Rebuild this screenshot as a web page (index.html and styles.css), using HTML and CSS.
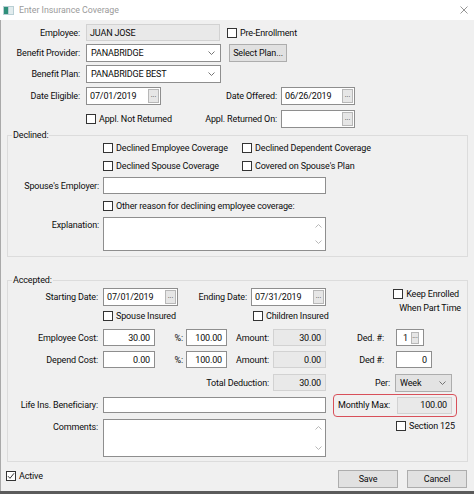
FILE: index.html
```html
<!DOCTYPE html>
<html>
<head>
<meta charset="utf-8">
<title>Enter Insurance Coverage</title>
<link rel="stylesheet" href="styles.css">
</head>
<body>
<div class="window">
  <div class="titlebar">
    <svg class="appicon" width="11" height="9" viewBox="0 0 11 9"><rect x="0" y="0" width="11" height="9" fill="#b9cfd4"/><rect x="1" y="1" width="4" height="7" fill="#2f8f7a"/><rect x="6" y="1" width="4" height="7" fill="#e2ecee"/></svg>
    <span class="title">Enter Insurance Coverage</span>
    <svg class="close" width="8" height="8" viewBox="0 0 8 8"><path d="M0.5 0.5L7.5 7.5M7.5 0.5L0.5 7.5" stroke="#8a8a8a" stroke-width="0.9"/></svg>
  </div>

  <div class="row r-emp">
    <span class="lbl top-lbl">Employee:</span>
    <div class="fld ro f-emp">JUAN JOSE</div>
    <span class="chk pre"><span class="cb"></span>Pre-Enrollment</span>
  </div>
  <div class="row r-prov">
    <span class="lbl top-lbl">Benefit Provider:</span>
    <div class="fld sel f-sel"><span>PANABRIDGE</span><svg class="chev" width="7" height="4" viewBox="0 0 7 4"><path d="M0.5 0.5L3.5 3.5L6.5 0.5" fill="none" stroke="#666" stroke-width="0.9"/></svg></div>
    <div class="btn b-plan">Select Plan...</div>
  </div>
  <div class="row r-plan">
    <span class="lbl top-lbl">Benefit Plan:</span>
    <div class="fld sel f-sel"><span>PANABRIDGE BEST</span><svg class="chev" width="7" height="4" viewBox="0 0 7 4"><path d="M0.5 0.5L3.5 3.5L6.5 0.5" fill="none" stroke="#666" stroke-width="0.9"/></svg></div>
  </div>
  <div class="row r-date">
    <span class="lbl top-lbl">Date Eligible:</span>
    <div class="fld date f-d1"><span>07/01/2019</span><span class="dots">...</span></div>
    <span class="lbl mid-lbl">Date Offered:</span>
    <div class="fld date f-d2"><span>06/26/2019</span><span class="dots">...</span></div>
  </div>
  <div class="row r-appl">
    <span class="lbl top-lbl"></span>
    <div class="cell f-d1"><span class="chk"><span class="cb"></span>Appl. Not Returned</span></div>
    <span class="lbl mid-lbl">Appl. Returned On:</span>
    <div class="fld date f-d2"><span></span><span class="dots">...</span></div>
  </div>

  <div class="group g-dec">
    <div class="gtitle">Declined:</div>
    <div class="row r-c1">
      <span class="lbl d-lbl"></span>
      <div class="cell c-dec"><span class="chk"><span class="cb"></span>Declined Employee Coverage</span></div>
      <span class="chk"><span class="cb"></span>Declined Dependent Coverage</span>
    </div>
    <div class="row r-c2">
      <span class="lbl d-lbl"></span>
      <div class="cell c-dec"><span class="chk"><span class="cb"></span>Declined Spouse Coverage</span></div>
      <span class="chk"><span class="cb"></span>Covered on Spouse's Plan</span>
    </div>
    <div class="row r-spe">
      <span class="lbl d-lbl">Spouse's Employer:</span>
      <div class="fld f-wide"></div>
    </div>
    <div class="row r-oth">
      <span class="lbl d-lbl"></span>
      <span class="chk"><span class="cb"></span>Other reason for declining employee coverage:</span>
    </div>
    <div class="row r-exp">
      <span class="lbl d-lbl ta-lbl">Explanation:</span>
      <div class="fld ta f-wide">
        <div class="sb">
          <svg width="7" height="4" viewBox="0 0 7 4"><path d="M0.5 3.5L3.5 0.5L6.5 3.5" fill="none" stroke="#b0b0b0" stroke-width="0.9"/></svg>
          <svg width="7" height="4" viewBox="0 0 7 4"><path d="M0.5 0.5L3.5 3.5L6.5 0.5" fill="none" stroke="#b0b0b0" stroke-width="0.9"/></svg>
        </div>
      </div>
    </div>
  </div>

  <div class="group g-acc">
    <div class="gtitle">Accepted:</div>
    <div class="row r-start">
      <span class="lbl a-lbl">Starting Date:</span>
      <div class="fld date f-d1"><span>07/01/2019</span><span class="dots">...</span></div>
      <span class="lbl end-lbl">Ending Date:</span>
      <div class="fld date f-d1"><span>07/31/2019</span><span class="dots">...</span></div>
      <div class="keep">
        <span class="chk"><span class="cb"></span>Keep Enrolled</span>
        <span class="keep2">When Part Time</span>
      </div>
    </div>
    <div class="row r-ins">
      <span class="lbl a-lbl"></span>
      <div class="cell c-ins"><span class="chk"><span class="cb"></span>Spouse Insured</span></div>
      <span class="chk"><span class="cb"></span>Children Insured</span>
    </div>
    <div class="row r-cost">
      <span class="lbl a-lbl">Employee Cost:</span>
      <div class="fld num f-cost">30.00</div>
      <span class="lbl pct-lbl">%:</span>
      <div class="fld num f-pct">100.00</div>
      <span class="lbl amt-lbl">Amount:</span>
      <div class="fld ro num f-amt">30.00</div>
      <span class="lbl ded-lbl">Ded. #:</span>
      <div class="fld num ded f-ded1"><span>1</span><span class="dots small">...</span></div>
    </div>
    <div class="row r-dep">
      <span class="lbl a-lbl">Depend Cost:</span>
      <div class="fld num f-cost">0.00</div>
      <span class="lbl pct-lbl">%:</span>
      <div class="fld num f-pct">100.00</div>
      <span class="lbl amt-lbl">Amount:</span>
      <div class="fld ro num f-amt">0.00</div>
      <span class="lbl ded-lbl">Ded #:</span>
      <div class="fld num f-ded2">0</div>
    </div>
    <div class="row r-tot">
      <span class="lbl tot-lbl">Total Deduction:</span>
      <div class="fld ro num f-amt">30.00</div>
      <span class="lbl per-lbl">Per:</span>
      <div class="fld sel gray f-per"><span>Week</span><svg class="chev" width="7" height="4" viewBox="0 0 7 4"><path d="M0.5 0.5L3.5 3.5L6.5 0.5" fill="none" stroke="#666" stroke-width="0.9"/></svg></div>
    </div>
    <div class="row r-life">
      <span class="lbl a-lbl">Life Ins. Beneficiary:</span>
      <div class="fld f-wide"></div>
      <div class="mmax">
        <span class="mm-lbl">Monthly Max:</span>
        <div class="fld ro num f-mm">100.00</div>
      </div>
    </div>
    <div class="row r-com">
      <span class="lbl a-lbl ta-lbl">Comments:</span>
      <div class="fld ta f-wide f-com">
        <div class="sb">
          <svg width="7" height="4" viewBox="0 0 7 4"><path d="M0.5 3.5L3.5 0.5L6.5 3.5" fill="none" stroke="#b0b0b0" stroke-width="0.9"/></svg>
          <svg width="7" height="4" viewBox="0 0 7 4"><path d="M0.5 0.5L3.5 3.5L6.5 0.5" fill="none" stroke="#b0b0b0" stroke-width="0.9"/></svg>
        </div>
      </div>
      <span class="chk s125"><span class="cb"></span>Section 125</span>
    </div>
  </div>

  <div class="footer">
    <span class="chk active"><span class="cb"><svg width="8" height="8" viewBox="0 0 8 8"><path d="M1 4.2L3 6.3L7 1.3" fill="none" stroke="#333" stroke-width="1"/></svg></span>Active</span>
    <div class="btn b-save">Save</div>
    <div class="btn b-cancel">Cancel</div>
  </div>
</div>
</body>
</html>
```

FILE: styles.css
```css
* { box-sizing: border-box; margin: 0; padding: 0; }
body {
  margin: 0;
  font-family: Roboto, "Liberation Sans", Arial, sans-serif;
  font-size: 9px;
  letter-spacing: -0.15px;
  color: #0c0c0c;
  background: #f0f0f0;
}
.window {
  width: 474px;
  height: 494px;
  background: #f0f0f0;
  border-bottom: 3px solid #5b5b5b;
  box-shadow: inset 1px 0 0 #a9a9a9;
  overflow: hidden;
}
.titlebar {
  height: 20px;
  background: #fff;
  display: flex;
  align-items: center;
}
.appicon { margin-left: 3px; flex: none; }
.title { margin-left: 5px; color: #9a9a9a; font-size: 8.8px; letter-spacing: 0; }
.close { margin-left: auto; margin-right: 6px; }

.row { display: flex; align-items: center; white-space: nowrap; }
.lbl { flex: none; text-align: right; }
.cell { flex: none; display: flex; align-items: center; }
.chk { display: flex; align-items: center; gap: 3px; flex: none; }
.cb {
  width: 10px; height: 10px; flex: none;
  border: 1px solid #333; background: #fff;
  display: flex; align-items: center; justify-content: center;
}

.fld {
  flex: none; height: 100%;
  background: #fff; border: 1px solid #8e8e8e;
  display: flex; align-items: center;
  padding: 0 3px; overflow: hidden;
}
.fld.ro { background: #e9e9e9; border-color: #d2d2d2; }
.fld.num { justify-content: flex-end; padding-right: 4px; }
.sel { justify-content: space-between; padding: 0 5px 0 4px; }
.sel.gray { background: #e3e3e3; border-color: #adadad; }
.date { justify-content: space-between; padding: 0 1px 0 3px; }
.dots {
  width: 11px; height: 14px; flex: none;
  background: #e6e6e6; border: 1px solid #b7b7b7;
  font-size: 7px; line-height: 1; color: #333; letter-spacing: 0;
  display: flex; align-items: flex-end; justify-content: center;
  padding-bottom: 3px;
}
.dots.small { width: 8px; height: 12px; margin-left: 3px; }
.ded { padding-right: 1px; }
.ta { justify-content: flex-end; align-items: stretch; padding: 0; }
.sb {
  width: 14px; display: flex; flex-direction: column;
  justify-content: space-between; align-items: center;
  padding: 6px 0;
}
.btn {
  flex: none;
  background: #e1e1e1; border: 1px solid #adadad;
  display: flex; align-items: center; justify-content: center;
}

/* top section */
.r-emp { margin-top: 4px; height: 17px; }
.r-prov { margin-top: 3px; height: 18px; }
.r-plan { margin-top: 3px; height: 18px; }
.r-date { margin-top: 4px; height: 18px; }
.r-appl { margin-top: 5px; height: 18px; }
.top-lbl { width: 80px; margin-right: 6px; }
.f-emp { width: 134px; }
.pre { margin-left: 7px; }
.f-sel { width: 135px; }
.b-plan { width: 58px; height: 18px; margin-left: 8px; }
.f-d1 { width: 75px; }
.mid-lbl { width: 116px; margin-right: 4px; }
.f-d2 { width: 74px; }

/* groups */
.group { margin: 0 6px 0 7px; border: 1px solid #dcdcdc; }
.gtitle {
  display: table; margin: -6px 0 0 4px; padding: 0 1px;
  height: 11px; line-height: 11px; background: #f0f0f0;
}
.g-dec { margin-top: 7px; height: 122px; }
.g-acc { margin-top: 23px; height: 182px; }

.d-lbl { width: 91px; margin-right: 4px; }
.a-lbl { width: 90px; margin-right: 5px; }
.ta-lbl { align-self: flex-start; padding-top: 3px; }
.f-wide { width: 223px; }

.r-c1 { height: 14px; }
.r-c2 { margin-top: 4px; height: 14px; }
.r-spe { margin-top: 4px; height: 17px; }
.r-oth { margin-top: 5px; height: 14px; }
.r-exp { margin-top: 4px; height: 34px; align-items: flex-start; }
.r-exp .fld { height: 34px; }
.c-dec { width: 139px; }

.r-start { margin-top: 2px; height: 18px; }
.end-lbl { width: 69px; margin-right: 4px; }
.keep {
  flex: none; width: 135px; align-self: flex-start; margin-top: -1px;
  display: flex; flex-direction: column; align-items: flex-end;
  line-height: 14px;
}
.keep .chk { margin-right: 2px; }
.r-ins { margin-top: 4px; height: 12px; }
.c-ins { width: 150px; }
.r-cost { margin-top: 7px; height: 17px; }
.r-dep { margin-top: 5px; height: 17px; }
.f-cost { width: 52px; }
.pct-lbl { width: 28px; margin-right: 3px; }
.f-pct { width: 41px; }
.amt-lbl { width: 42px; margin-right: 4px; }
.f-amt { width: 53px; }
.ded-lbl { width: 58px; margin-right: 12px; }
.f-ded1 { width: 28px; }
.f-ded2 { width: 36px; }
.r-tot { margin-top: 6px; height: 17px; }
.tot-lbl { width: 261px; margin-right: 4px; }
.per-lbl { width: 64px; margin-right: 5px; }
.f-per { width: 57px; height: 18px; }
.r-life { margin-top: 6px; height: 16px; }
.mmax {
  flex: none; margin-left: 7px; width: 124px; height: 23px;
  border: 1px solid #d8505a; border-radius: 4px;
  display: flex; align-items: center;
}
.mm-lbl { width: 63px; padding-left: 4px; flex: none; }
.f-mm { width: 55px; height: 17px; }
.r-com { margin-top: 6px; height: 38px; align-items: flex-start; }
.f-com { height: 38px; }
.s125 { margin-left: 70px; margin-top: 2px; }

.footer { display: flex; align-items: flex-start; height: 29px; }
.active { margin: 9px 0 0 6px; }
.b-save { margin-left: auto; margin-top: 8px; width: 60px; height: 18px; }
.b-cancel { margin: 8px 7px 0 9px; width: 60px; height: 18px; }
```
